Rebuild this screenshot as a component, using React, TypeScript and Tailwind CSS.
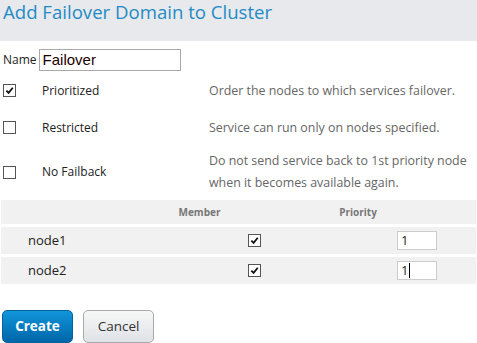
import { useState } from 'react';

const options = [
  { label: 'Prioritized', desc: 'Order the nodes to which services failover.', checked: true },
  { label: 'Restricted', desc: 'Service can run only on nodes specified.', checked: false },
  { label: 'No Failback', desc: 'Do not send service back to 1st priority node when it becomes available again.', checked: false }
];

const nodes = ['node1', 'node2'];

function Check({ on }: { on: boolean }) {
  return (
    <span className="flex h-[13px] w-[13px] items-center justify-center border border-[#555] bg-white">
      {on && (
        <svg viewBox="0 0 10 10" className="h-[9px] w-[9px]">
          <path d="M1.5 5.2 L4 7.6 L8.6 2" fill="none" stroke="#111" strokeWidth="2" />
        </svg>
      )}
    </span>
  );
}

export default function App() {
  const [name, setName] = useState('Failover');

  return (
    <div className="h-[343px] w-[477px] overflow-hidden bg-white font-['Open_Sans',sans-serif] text-[#222]">
      <div className="h-[41px] bg-[#e7e9ec] px-[3px]">
        <h1 className="text-[18.6px] leading-[23px] text-[#1f8bc6]">
          Add Failover Domain to Cluster
        </h1>
      </div>

      <div className="mt-[8px] flex items-center gap-[2px] pl-[3px]">
        <span className="text-[12px]">Name</span>
        <input
          value={name}
          onChange={e => setName(e.target.value)}
          className="h-[22px] w-[142px] border border-[#aaa] px-[3px] font-['Liberation_Sans',sans-serif] text-[15px] text-[#200] outline-none"
        />
      </div>

      <div className="mt-[1px] flex flex-col">
        {options.map((o, i) => (
          <div
            key={o.label}
            className={`flex items-center text-[12px] ${i === 2 ? 'h-[52px]' : 'h-[37px]'}`}
          >
            <div className="w-[42px] pl-[3px]">
              <Check on={o.checked} />
            </div>
            <div className="w-[167px]">{o.label}</div>
            <div className="w-[268px] text-[12.4px] leading-[22px] text-[#666]">{o.desc}</div>
          </div>
        ))}
      </div>

      <div className="mt-[2px] flex flex-col gap-[3px] px-[1px]">
        <div className="flex h-[24px] items-center bg-[#f1f1f1] text-[10px] font-bold text-[#777]">
          <div className="w-[170px]" />
          <div className="w-[57px] text-center">Member</div>
          <div className="w-[105px]" />
          <div className="w-[50px] text-center">Priority</div>
        </div>
        {nodes.map((n, i) => (
          <div key={n} className="flex h-[27px] items-center bg-[#f1f1f1] text-[13px]">
            <div className="w-[247px] pl-[27px]">{n}</div>
            <div className="w-[149px]">
              <Check on />
            </div>
            <div className="flex h-[19px] w-[40px] items-center border border-[#ccc] bg-white px-[3px] text-[13px]">
              1
              {i === 1 && <span className="ml-[1px] h-[15px] w-[1px] bg-black" />}
            </div>
          </div>
        ))}
      </div>

      <div className="mt-[26px] flex gap-[10px] pl-[2px]">
        <button className="h-[33px] w-[71px] rounded-[5px] border border-[#05639c] bg-gradient-to-b from-[#1295db] to-[#0066a8] text-[13.5px] font-bold text-white">
          Create
        </button>
        <button className="h-[33px] w-[71px] rounded-[5px] border border-[#a9a9a9] bg-gradient-to-b from-[#f7f7f7] to-[#dfe2e6] text-[13.5px] text-[#333]">
          Cancel
        </button>
      </div>
    </div>
  );
}
